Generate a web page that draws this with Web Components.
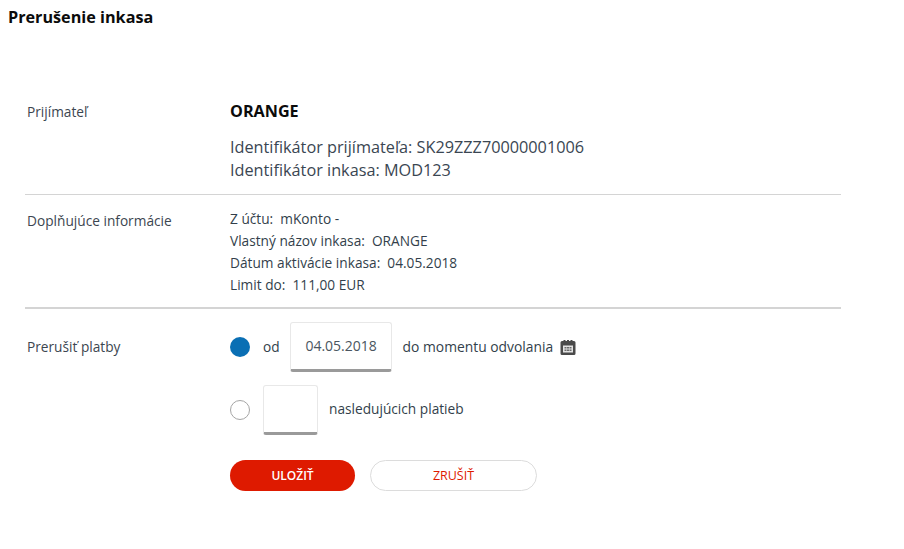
<!DOCTYPE html>
<html lang="sk">
<head>
<meta charset="utf-8">
<title>Prerušenie inkasa</title>
<style>
  html, body { margin: 0; padding: 0; background: #fff; }
  body { font-family: "Open Sans", sans-serif; color: #333f4b; }
</style>
</head>
<body>
<template id="row-tpl">
  <style>
    :host { display: grid; grid-template-columns: 205px 1fr; box-sizing: border-box; font-size: 13.7px; line-height: 22px; }
    .label { color: #3c4650; padding-left: 2px; }
  </style>
  <div class="label"><slot name="label"></slot></div>
  <div><slot></slot></div>
</template>

<template id="field-tpl">
  <style>
    :host { display: inline-block; box-sizing: border-box; height: 50px; padding-left: 1px; background: #fff; border: 1px solid #e8e8e8; border-bottom: 3px solid #9a9a9a; border-radius: 3px; text-align: center; font-size: 14px; line-height: 46px; color: #4a5560; }
  </style>
  <slot></slot>
</template>

<template id="radio-tpl">
  <style>
    :host { display: inline-block; box-sizing: border-box; width: 20px; height: 20px; border-radius: 50%; border: 1px solid #a5a5a5; background: #fff; flex: none; }
    :host([checked]) { border: 0; background: #0a6fb4; }
  </style>
</template>

<template id="btn-tpl">
  <style>
    :host { display: inline-flex; align-items: center; justify-content: center; box-sizing: border-box; height: 31px; border-radius: 16px; font-size: 12.5px; }
    :host([primary]) { width: 125px; background: #de1a00; color: #fff; font-weight: 600; font-size: 12px; }
    :host([secondary]) { width: 167px; background: #fff; color: #de1a00; border: 1px solid #dcdcdc; }
  </style>
  <slot></slot>
</template>

<template id="page-tpl">
  <style>
    :host { display: block; width: 904px; height: 549px; box-sizing: border-box; padding: 7px 8px 0; }
    h1 { margin: 0; font-size: 16.2px; line-height: 20px; font-weight: 700; color: #0b0b0b; }
    .wrap { margin: 73px 0 0 17px; width: 816px; }
    .first { padding-bottom: 12px; border-bottom: 1px solid #d4d4d4; }
    .first [slot=label] { display: block; padding-top: 1px; }
    .name { font-size: 16.2px; font-weight: 700; line-height: 22px; color: #0b0b0b; margin-bottom: 14px; }
    .ids { font-size: 16.25px; line-height: 23px; color: #3a4652; }
    .second { padding: 13px 0 11px; border-bottom: 2px solid #d4d4d4; }
    .second [slot=label] { display: block; padding-top: 2px; }
    .third { padding-top: 13px; }
    .opt { display: flex; align-items: center; height: 50px; }
    .opt + .opt { margin-top: 13px; }
    .od { margin: 0 10px 0 13px; }
    .date { width: 102px; }
    .after { margin-left: 11px; }
    .until { font-size: 13.85px; }
    .count { width: 55px; margin-left: 13px; }
    .next { position: relative; top: -1px; }
    svg { margin-left: 7px; flex: none; }
    .btns { display: flex; gap: 15px; margin-top: 25px; }
  </style>
  <h1>Prerušenie inkasa</h1>
  <div class="wrap">
    <form-row class="first">
      <span slot="label">Prijímateľ</span>
      <div class="name">ORANGE</div>
      <div class="ids">Identifikátor prijímateľa: SK29ZZZ70000001006<br>Identifikátor inkasa: MOD123</div>
    </form-row>
    <form-row class="second">
      <span slot="label">Doplňujúce informácie</span>
      <div>Z účtu:&nbsp; mKonto -<br>Vlastný názov inkasa:&nbsp; ORANGE<br>Dátum aktivácie inkasa:&nbsp; 04.05.2018<br>Limit do:&nbsp; 111,00 EUR</div>
    </form-row>
    <form-row class="third">
      <span slot="label" style="display:block;line-height:50px">Prerušiť platby</span>
      <div class="opt">
        <form-radio checked></form-radio>
        <span class="od">od</span>
        <text-field class="date">04.05.2018</text-field>
        <span class="after until">do momentu odvolania</span>
        <svg width="16" height="15" viewBox="0 0 16 15"><path fill="#4a4a4a" d="M2 1h1.5V0h2v1h1.5V0h2v1h1.5V0h2v1H14a1.5 1.5 0 0 1 1.5 1.5v11A1.5 1.5 0 0 1 14 15H2a1.5 1.5 0 0 1-1.5-1.5v-11A1.5 1.5 0 0 1 2 1z"/><path fill="#e2e2e2" d="M3 5.5h10v7H3z"/><path fill="#6a6a6a" d="M4.5 7h2v1.5h-2zM7 7h2v1.5H7zM9.5 7h2v1.5h-2zM4.5 9.5h2V11h-2zM7 9.5h2V11H7zM9.5 9.5h2V11h-2z"/></svg>
      </div>
      <div class="opt">
        <form-radio></form-radio>
        <text-field class="count"></text-field>
        <span class="after next">nasledujúcich platieb</span>
      </div>
      <div class="btns">
        <form-button primary>ULOŽIŤ</form-button>
        <form-button secondary>ZRUŠIŤ</form-button>
      </div>
    </form-row>
  </div>
</template>

<inkaso-page></inkaso-page>

<script>
  function define(tag, tplId) {
    customElements.define(tag, class extends HTMLElement {
      constructor() {
        super()
        this.attachShadow({ mode: 'open' })
        this.shadowRoot.appendChild(document.getElementById(tplId).content.cloneNode(true))
      }
    })
  }
  define('form-row', 'row-tpl')
  define('text-field', 'field-tpl')
  define('form-radio', 'radio-tpl')
  define('form-button', 'btn-tpl')
  define('inkaso-page', 'page-tpl')
</script>
</body>
</html>
